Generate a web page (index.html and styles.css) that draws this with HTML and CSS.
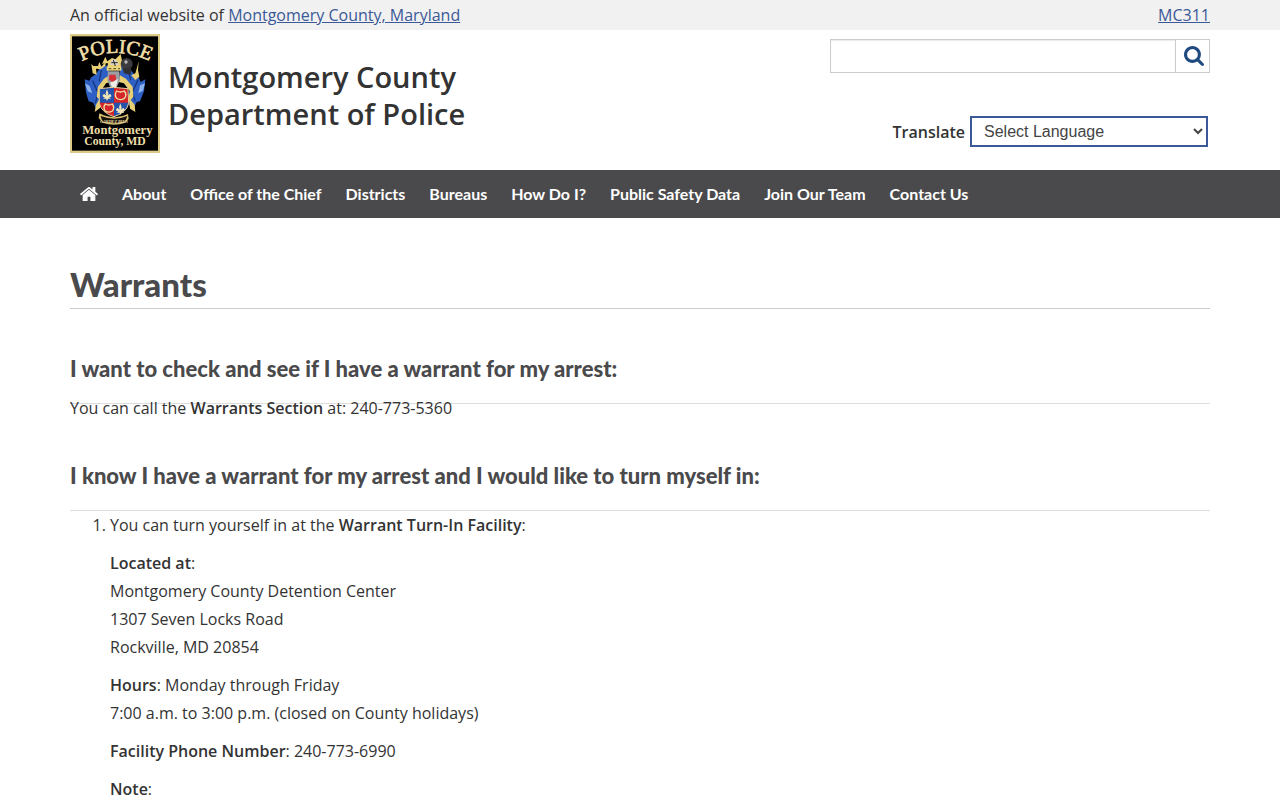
FILE: index.html
```html
<!DOCTYPE html>
<html lang="en">
<head>
    <meta charset="UTF-8">
    <meta name="viewport" content="width=device-width, initial-scale=1.0">
    <title>Warrants - Montgomery County Department of Police</title>
    <link rel="stylesheet" href="styles.css">
</head>
<body>
    <div class="top-bar">
        <div class="container top-bar-inner">
            <span>An official website of <a href="#">Montgomery County, Maryland</a></span>
            <a href="#">MC311</a>
        </div>
    </div>

    <header class="container header">
        <a class="brand" href="#">
            <svg class="logo" viewBox="0 0 270 357" role="img" aria-label="Montgomery County Police">
                <rect width="270" height="357" fill="#dccb86"/>
                <rect x="6" y="7" width="258" height="343" fill="#000"/>
                <path id="arc" d="M26 86 Q137 28 248 86" fill="none"/>
                <text class="logo-text logo-arc" font-size="60" text-anchor="middle"><textPath href="#arc" startOffset="50%">POLICE</textPath></text>
                <!-- blue mantling -->
                <path fill="#2d5fc4" d="M78 120 L92 98 L114 94 L120 130 L92 168 L96 210 L80 230 L70 206 L56 202 L48 176 L44 136 L58 140 L64 130 Z"/>
                <path fill="#2d5fc4" d="M190 118 L176 100 L152 96 L148 130 L178 168 L174 208 L188 228 L200 204 L210 202 L222 172 L226 136 L212 144 L206 130 Z"/>
                <path fill="#8db3ee" d="M45 148 l14 8 8 22 -14 -6zM225 148 l-15 6 -5 24 14 -8z"/>
                <path fill="none" stroke="#16377f" stroke-width="4" d="M68 140 L84 176 L76 208 M204 138 L186 176 L196 200 M94 108 L88 142 M176 112 L182 138"/>
                <!-- gold mantling -->
                <path fill="#e9cf73" d="M64 90 L70 96 L84 96 L88 84 L94 98 L108 82 L106 96 L92 106 L78 104 L80 122 L68 118 Z"/>
                <path fill="#e9cf73" d="M206 82 L204 108 L208 128 L196 138 L184 124 L196 118 L200 104 Z"/>
                <path fill="#e9cf73" d="M118 124 L102 134 L84 158 L80 188 L88 196 L78 212 L74 234 L90 222 L96 190 L92 172 L108 148 L122 144 Z"/>
                <path fill="#e9cf73" d="M150 124 L168 134 L188 158 L190 188 L182 198 L194 212 L196 234 L180 224 L176 190 L180 172 L162 148 L146 144 Z"/>
                <!-- crest and helmet -->
                <path fill="#e9cf73" d="M96 90 L106 68 L112 82 L126 72 L136 76 L152 60 L156 80 L152 102 L112 102 L114 88 L104 88 Z"/>
                <circle cx="170" cy="90" r="18" fill="#3c3c40"/>
                <circle cx="168" cy="84" r="5" fill="#bbb"/>
                <path fill="#302f32" d="M158 104 L184 98 L182 122 L162 118 Z"/>
                <path fill="#d9d5cb" d="M120 92 L126 76 L140 78 L146 94 Z"/>
                <path stroke="#222" stroke-width="3" d="M124 86 L143 86 M130 78 L136 96"/>
                <path fill="#ecd67e" d="M110 98 h44 v12 h-44z"/>
                <path stroke="#4c4216" stroke-width="3" d="M116 104h8m6 0h8m6 0h6"/>
                <path fill="#9d9da4" d="M114 112 L148 112 L150 138 L138 164 L122 164 L112 138 Z"/>
                <path fill="#d52f35" d="M118 122 h18 l3 14 -10 8 -12 -6z"/>
                <path fill="#eeeee7" d="M120 146 l12 -4 12 -8 -6 26 -8 8z"/>
                <!-- quartered shield -->
                <path fill="#d3252c" d="M88 164 L130 160 L174 164 L176 208 Q170 236 132 248 Q94 236 88 208 Z"/>
                <path fill="#2453ae" d="M88 164 L132 160 V206 H88 Z"/>
                <path fill="#2453ae" d="M132 206 H176 Q172 236 132 248 Z"/>
                <path fill="none" stroke="#e4d49b" stroke-width="3" d="M88 164 L130 160 L174 164 L176 208 Q170 236 132 248 Q94 236 88 208 Z"/>
                <g fill="#f0e4b6">
                    <path id="fleur" d="M111 166 l4 12 -2 7 q8 -10 11 0 q1 5 -6 4 q1 4 5 5 l-9 0 -3 7 -3 -7 -9 0 q4 -1 5 -5 q-7 1 -6 -4 q3 -10 11 0 l-2 -7z"/>
                    <use href="#fleur" x="40" y="42"/>
                </g>
                <g fill="#d3252c" stroke="#f0dfa0" stroke-width="4">
                    <path d="M140 171 q12 6 23 0 q9 12 0 22 q-12 8 -23 0 q-8 -10 0 -22z"/>
                    <path d="M106 210 q10 6 21 0 q8 11 0 21 q-11 7 -21 0 q-8 -10 0 -21z"/>
                </g>
                <!-- ribbon -->
                <path fill="#d5bd70" d="M88 238 Q134 260 174 240 L176 254 L166 266 Q132 278 98 266 L86 252 Z"/>
                <path fill="#16120a" d="M92 246 Q134 262 172 246 L166 262 Q132 273 97 262 Z"/>
                <text class="logo-text" x="132" y="266" font-size="12" text-anchor="middle">GARDEZ BIEN</text>
                <text class="logo-text" x="142" y="299" font-size="38" text-anchor="middle">Montgomery</text>
                <text class="logo-text" x="135" y="334" font-size="35" text-anchor="middle">County, MD</text>
            </svg>
            <span class="brand-name">Montgomery County<br>Department of Police</span>
        </a>
        <div class="tools">
            <form class="search" role="search">
                <input class="search-input" type="text" aria-label="Search">
                <button class="search-button" type="submit" aria-label="Search">
                    <svg class="search-icon" viewBox="0 128 1664 1664">
                        <path fill="currentColor" d="M1152 832q0-185-131.5-316.5t-316.5-131.5-316.5 131.5-131.5 316.5 131.5 316.5 316.5 131.5 316.5-131.5 131.5-316.5zm512 832q0 52-38 90t-90 38q-54 0-90-38l-343-342q-179 124-399 124-143 0-273.5-55.5t-225-150-150-225-55.5-273.5 55.5-273.5 150-225 225-150 273.5-55.5 273.5 55.5 225 150 150 225 55.5 273.5q0 220-124 399l343 343q37 37 37 90z"/>
                    </svg>
                </button>
            </form>
            <div class="translate">
                <label for="language">Translate</label>
                <select id="language" class="language">
                    <option>Select Language</option>
                </select>
            </div>
        </div>
    </header>

    <nav class="nav">
        <div class="container nav-inner">
            <a href="#" aria-label="Home">
                <svg class="home-icon" viewBox="16 220 1632 1344">
                    <path fill="currentColor" d="M1408 992v480q0 26-19 45t-45 19h-384v-384h-256v384h-384q-26 0-45-19t-19-45v-480q0-1 .5-3t.5-3l575-474 575 474q1 2 1 6zm223-69l-62 74q-8 9-21 11h-3q-13 0-21-7l-692-577-692 577q-12 8-24 7-13-2-21-11l-62-74q-8-10-7-23.5t11-21.5l719-599q32-26 76-26t76 26l244 204v-195q0-14 9-23t23-9h192q14 0 23 9t9 23v408l219 182q10 8 11 21.5t-7 23.5z"/>
                </svg>
            </a>
            <a href="#">About</a>
            <a href="#">Office of the Chief</a>
            <a href="#">Districts</a>
            <a href="#">Bureaus</a>
            <a href="#">How Do I?</a>
            <a href="#">Public Safety Data</a>
            <a href="#">Join Our Team</a>
            <a href="#">Contact Us</a>
        </div>
    </nav>

    <main class="container content">
        <h1>Warrants</h1>

        <h2>I want to check and see if I have a warrant for my arrest:</h2>
        <p>You can call the <strong>Warrants Section</strong> at: 240-773-5360</p>

        <h2>I know I have a warrant for my arrest and I would like to turn myself in:</h2>
        <ol>
            <li>
                <p>You can turn yourself in at the <strong>Warrant Turn-In Facility</strong>:</p>
                <p><strong>Located at</strong>:<br>
                Montgomery County Detention Center<br>
                1307 Seven Locks Road<br>
                Rockville, MD 20854</p>
                <p><strong>Hours</strong>: Monday through Friday<br>
                7:00 a.m. to 3:00 p.m. (closed on County holidays)</p>
                <p><strong>Facility Phone Number</strong>: 240-773-6990</p>
                <p><strong>Note</strong>:</p>
            </li>
        </ol>
    </main>
</body>
</html>
```
FILE: styles.css
```css
* {
    box-sizing: border-box;
}

body {
    margin: 0;
    font-family: "Open Sans", sans-serif;
    font-size: 16px;
    line-height: 28px;
    color: #333;
    background: #fff;
}

.container {
    max-width: 1170px;
    margin: 0 auto;
    padding: 0 15px;
}

strong {
    font-weight: 600;
}

/* Top bar */
.top-bar {
    background: #f1f1f1;
    line-height: 30px;
}

.top-bar-inner {
    display: flex;
    justify-content: space-between;
}

.top-bar a {
    color: #3b5998;
}

/* Header */
.header {
    display: flex;
    justify-content: space-between;
    min-height: 140px;
    padding-top: 4px;
}

.brand {
    display: flex;
    align-items: flex-start;
    gap: 8px;
    color: #333;
    text-decoration: none;
}

.logo {
    width: 90px;
    height: 119px;
}

.logo-text {
    font-family: "Liberation Serif", serif;
    font-weight: bold;
    fill: #eedfa8;
}

.logo-arc {
    font-weight: normal;
    stroke: #eedfa8;
    stroke-width: 2;
}

.brand-name {
    padding-top: 24px;
    font-size: 29px;
    font-weight: 600;
    line-height: 37px;
}

.tools {
    display: flex;
    flex-direction: column;
    width: 380px;
    padding-top: 5px;
}

.search {
    display: flex;
    height: 34px;
}

.search-input {
    flex: 1;
    min-width: 0;
    padding: 6px 12px;
    border: 1px solid #ccc;
    box-shadow: inset 0 1px 1px rgba(0, 0, 0, 0.08);
    font: inherit;
}

.search-button {
    width: 34px;
    padding: 0 0 0 2px;
    border: 1px solid #ccc;
    border-left: 0;
    background: #fff;
    color: #1f4a80;
}

.search-icon {
    display: block;
    width: 20px;
    height: 20px;
    margin: 0 auto;
}

.translate {
    display: flex;
    justify-content: flex-end;
    align-items: center;
    gap: 5px;
    margin-top: 43px;
    padding-right: 2px;
    font-weight: 600;
}

.language {
    width: 238px;
    height: 31px;
    padding: 0 0 0 8px;
    border: 2px solid #3b5998;
    background: #fff;
    color: #444;
    font-family: "Liberation Sans", Arial, sans-serif;
    font-size: 16px;
}

/* Navigation */
.nav {
    background: #4a4a4c;
    font-family: Lato, sans-serif;
    font-weight: bold;
    line-height: 48px;
}

.nav-inner {
    display: flex;
    gap: 24px;
    padding-left: 25px;
}

.nav a {
    color: #fff;
    text-decoration: none;
}

.home-icon {
    width: 18px;
    height: 16px;
    vertical-align: -2px;
}

/* Content */
.content {
    padding-top: 46px;
}

h1,
h2 {
    font-family: Lato, sans-serif;
    font-weight: 900;
    color: #4a4a4c;
}

h1 {
    margin: 0 0 46px;
    padding-bottom: 4px;
    border-bottom: 1px solid #ccc;
    font-size: 33px;
    line-height: 40px;
}

/* the rule sits behind the first line of text */
h2 {
    margin: 40px 0 -10px;
    padding-bottom: 20px;
    border-bottom: 1px solid #ddd;
    font-size: 22px;
    line-height: 28px;
}

p {
    margin: 0 0 10px;
}

ol {
    margin: 10px 0;
    padding-left: 40px;
}
```
